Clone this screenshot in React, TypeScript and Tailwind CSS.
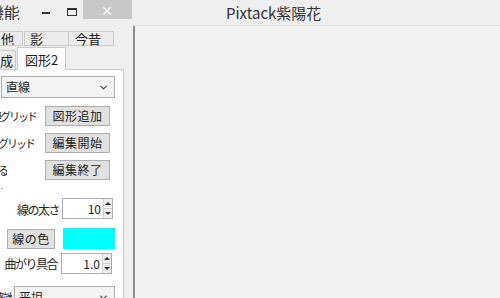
import { ChevronDown } from "lucide-react";

const font = "font-['Noto_Sans_CJK_JP','Noto_Sans',sans-serif]";

const Spinner = ({ value }: { value: string }) => (
  <div className="flex h-[21px] w-[51px] shrink-0 border border-[#abadb3] bg-white">
    <div className="flex flex-1 items-center justify-end pr-[2px] text-[12px] leading-none text-[#222]">
      {value}
    </div>
    <div className="flex w-[9px] flex-col border-l border-[#d0d0d0]">
      <div className="flex flex-1 items-center justify-center border-b border-[#d0d0d0] bg-[#eeeeee]">
        <div className="h-0 w-0 border-x-[3px] border-b-[3px] border-x-transparent border-b-[#333]" />
      </div>
      <div className="flex flex-1 items-center justify-center bg-[#eeeeee]">
        <div className="h-0 w-0 border-x-[3px] border-t-[3px] border-x-transparent border-t-[#333]" />
      </div>
    </div>
  </div>
);

const Btn = ({ label, w }: { label: string; w: string }) => (
  <div
    className={`flex h-[20px] ${w} items-center justify-center border border-[#adadad] bg-[#e1e1e1] text-[12px] leading-none tracking-[0.5px] text-[#222]`}
  >
    {label}
  </div>
);

const Clip = ({ text, w }: { text: string; w: string }) => (
  <div
    className={`flex ${w} shrink-0 justify-end overflow-hidden whitespace-nowrap text-[11px] leading-none tracking-[-2px] text-[#222]`}
  >
    {text}
  </div>
);

export default function App() {
  return (
    <div className={`flex h-[298px] w-[500px] overflow-hidden bg-[#f0f0f0] ${font}`}>
      {/* tool window */}
      <div className="flex h-[298px] w-[132px] shrink-0 flex-col overflow-hidden bg-[#efefef]">
        <div className="flex h-[26px] shrink-0 items-start">
          <div className="flex w-[20px] justify-end overflow-hidden whitespace-nowrap pt-[4px] text-[16px] leading-none text-[#333]">
            機能
          </div>
          <div className="ml-[22px] mt-[12px] h-[2px] w-[8px] bg-[#333]" />
          <div className="ml-[17px] mt-[8px] h-[8px] w-[10px] border border-t-2 border-[#333]" />
          <div className="ml-[6px] flex h-[19px] w-[50px] items-center justify-center bg-[#c8c8c8] text-[14px] leading-none text-white">
            ✕
          </div>
        </div>
        <div className="flex min-h-0 flex-1">
          <div className="flex w-[124px] flex-col">
            {/* tabs */}
            <div className="mt-[5px] flex h-[15px] shrink-0 text-[13px] leading-none text-[#222]">
              <div className="flex w-[23px] items-center justify-end overflow-hidden whitespace-nowrap border border-l-0 border-[#c9c9c9] bg-[#ececec] pr-[8px]">
                その他
              </div>
              <div className="ml-[1px] flex w-[45px] items-center border border-[#c9c9c9] bg-[#ececec] pl-[5px]">
                影
              </div>
              <div className="flex w-[45px] items-center border border-l-0 border-[#c9c9c9] bg-[#ececec] pl-[6px]">
                今昔
              </div>
            </div>
            <div className="relative flex h-[23px] shrink-0 items-end text-[13px] leading-none text-[#222]">
              <div className="flex h-[19px] w-[16px] items-center justify-end overflow-hidden whitespace-nowrap border border-l-0 border-b-0 border-[#c9c9c9] bg-[#ececec] pr-[2px]">
                作成
              </div>
              <div className="relative z-10 -mb-[1px] ml-[1px] flex h-[23px] w-[49px] items-center border border-b-0 border-[#c9c9c9] bg-white pl-[7px]">
                図形2
              </div>
            </div>
            <div className="flex min-h-0 flex-1 flex-col overflow-hidden border-t border-r border-[#c9c9c9] bg-white text-[#222]">
              <div className="ml-[1px] mt-[6px] flex h-[22px] w-[114px] shrink-0 items-center justify-between border border-[#acacac] bg-[#f4f4f4] pl-[4px] pr-[5px] text-[12px] leading-none">
                <span>直線</span>
                <ChevronDown size={11} strokeWidth={2.5} className="text-[#444]" />
              </div>
              <div className="mt-[8px] flex shrink-0 items-center">
                <Clip text="関連グリッド" w="w-[36px]" />
                <div className="ml-[9px]">
                  <Btn label="図形追加" w="w-[65px]" />
                </div>
              </div>
              <div className="mt-[7px] flex shrink-0 items-center">
                <Clip text="グリッド" w="w-[34px]" />
                <div className="ml-[11px]">
                  <Btn label="編集開始" w="w-[65px]" />
                </div>
              </div>
              <div className="mt-[7px] flex shrink-0 items-center">
                <Clip text="する" w="w-[7px]" />
                <div className="ml-[38px]">
                  <Btn label="編集終了" w="w-[65px]" />
                </div>
              </div>
              <div className="mt-[4px] h-[6px] shrink-0 text-[8px] leading-none text-[#666]">·</div>
              <div className="mt-[8px] flex shrink-0 items-center">
                <div className="w-[62px] whitespace-nowrap pr-[3px] pt-[2px] text-right text-[12px] leading-none tracking-[-1.5px]">
                  線の太さ
                </div>
                <Spinner value="10" />
              </div>
              <div className="mt-[9px] flex shrink-0 items-center">
                <div className="ml-[7px]">
                  <Btn label="線の色" w="w-[48px]" />
                </div>
                <div className="ml-[8px] h-[21px] w-[52px] bg-[#00ffff]" />
              </div>
              <div className="mt-[4px] flex shrink-0 items-center">
                <div className="w-[61px] whitespace-nowrap pr-[4px] text-right text-[12px] leading-none tracking-[-1.5px]">
                  曲がり具合
                </div>
                <Spinner value="1.0" />
              </div>
              <div className="mt-[12px] flex shrink-0 items-center">
                <Clip text="終端" w="w-[12px]" />
                <div className="ml-[2px] flex h-[22px] w-[101px] items-center justify-between border border-[#acacac] bg-[#f4f4f4] pl-[4px] pr-[5px] text-[12px] leading-none">
                  <span>平坦</span>
                  <ChevronDown size={11} strokeWidth={2.5} className="text-[#444]" />
                </div>
              </div>
            </div>
          </div>
          <div className="flex-1 bg-[#efefef]" />
        </div>
      </div>

      {/* main window */}
      <div className="flex flex-1 flex-col">
        <div className="flex h-[26px] shrink-0 items-center border-b border-[#e2e2e2] bg-[#efefef] pl-[94px] text-[15px] leading-none text-[#333]">
          Pixtack紫陽花
        </div>
        <div className="ml-[1px] flex-1 border-l-2 border-[#8c8c8c] bg-[#f2f2f2]" />
      </div>
    </div>
  );
}
